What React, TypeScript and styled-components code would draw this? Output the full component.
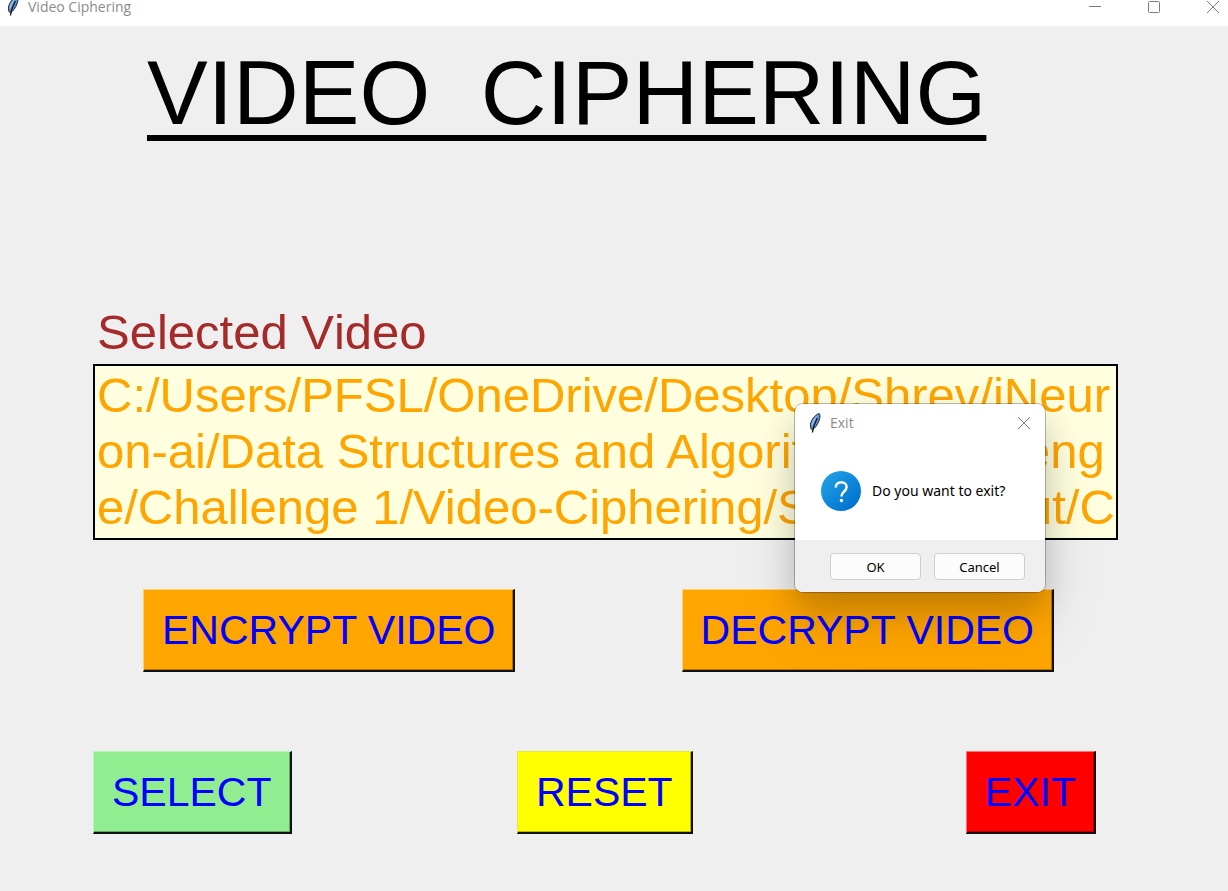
import React from "react";
import styled, { createGlobalStyle } from "styled-components";

const GlobalStyle = createGlobalStyle`
  *, *::before, *::after { box-sizing: border-box; }
  html, body { margin: 0; background: #efefef; }
  body { font-family: "Liberation Sans", Arial, sans-serif; font-kerning: none; }
  body, #root { min-height: 100vh; }
  #root { display: flex; flex-direction: column; }
`;

const Window = styled.div`
  position: relative;
  flex: 1;
  display: flex;
  flex-direction: column;
`;

const TitleBar = styled.header`
  display: flex;
  align-items: flex-start;
  height: 26px;
  padding-left: 7px;
  background: #fff;
  color: #8c8c8c;
`;

const WindowName = styled.span`
  flex: 1;
  margin-left: 9px;
  font: 14px/14px "Open Sans", sans-serif;
`;

const WindowControls = styled.div`
  display: flex;
  gap: 45px;
  padding-right: 8px;
`;

const IconButton = styled.button`
  display: flex;
  padding: 0;
  border: 0;
  background: none;
  color: #7c7c7c;
`;

const Content = styled.main`
  display: flex;
  flex-direction: column;
  padding: 14px 110px 56px 93px;
`;

const Heading = styled.h1`
  margin: 0 0 0 54px;
  font-size: 91px;
  line-height: 106px;
  font-weight: 400;
  color: #000;
  white-space: pre;
  text-decoration: underline;
  text-decoration-thickness: 6px;
  text-underline-offset: 11px;
  text-decoration-skip-ink: none;
`;

const FieldLabel = styled.label`
  margin-top: 158px;
  padding-left: 4px;
  font-size: 49px;
  line-height: 56px;
  color: #a52a2a;
`;

const PathField = styled.textarea`
  display: block;
  width: 100%;
  height: 176px;
  margin: 4px 0 0;
  padding: 1px 0 0 2px;
  border: 2px solid #000;
  border-radius: 0;
  outline: 0;
  resize: none;
  overflow: hidden;
  white-space: pre;
  background: #ffffe0;
  color: #ffa500;
  font: 49px/56px "Liberation Sans", Arial, sans-serif;
`;

const CipherRow = styled.div`
  display: flex;
  justify-content: space-between;
  margin-top: 49px;
  padding: 0 64px 0 50px;
`;

const ActionRow = styled.div`
  display: grid;
  grid-template-columns: 425fr 450fr auto;
  justify-items: start;
  margin-top: 79px;
  padding-right: 22px;
`;

const RaisedButton = styled.button<{ $fill: string; $light: string; $shade: string }>`
  height: 83px;
  padding: 0 18px;
  border: solid #111;
  border-width: 1px 2px 2px 1px;
  border-top-color: ${(p) => p.$light};
  border-left-color: ${(p) => p.$light};
  box-shadow: inset -1px -1px ${(p) => p.$shade};
  background: ${(p) => p.$fill};
  color: #00f;
  font: 41px/47px "Liberation Sans", Arial, sans-serif;
`;

const Dialog = styled.section`
  position: absolute;
  top: 404px;
  left: 795px;
  width: 250px;
  border-radius: 8px;
  background: #fff;
  box-shadow: 0 0 0 1px rgba(0, 0, 0, 0.25), 0 16px 32px rgba(0, 0, 0, 0.18), 0 32px 64px rgba(0, 0, 0, 0.1);
  font-family: "Open Sans", sans-serif;
`;

const DialogBar = styled.div`
  display: flex;
  align-items: center;
  height: 38px;
  padding: 0 14px;
`;

const DialogName = styled.h2`
  flex: 1;
  margin: 0 0 0 9px;
  color: #8c8c8c;
  font-size: 14px;
  line-height: 20px;
  font-weight: 400;
`;

const DialogBody = styled.div`
  display: flex;
  align-items: center;
  gap: 11px;
  height: 98px;
  padding: 0 0 0 26px;
  color: #000;
`;

const Message = styled.p`
  margin: 0;
  font: 14px/20px "Noto Sans", sans-serif;
`;

const DialogFooter = styled.div`
  display: flex;
  justify-content: flex-end;
  gap: 13px;
  height: 52px;
  padding: 13px 20px 0 0;
  border-radius: 0 0 8px 8px;
  background: #efefef;
`;

const DialogButton = styled.button`
  width: 91px;
  height: 27px;
  padding: 0;
  border: 1px solid #cfcfcf;
  border-radius: 4px;
  background: #fcfcfc;
  color: #000;
  font: 13px/20px "Noto Sans", sans-serif;
`;

const Feather = () => (
  <svg width="12" height="20" viewBox="0 0 12 20" aria-hidden="true">
    <path d="M10.300.6C7 1.300 3.500 5 1.900 9.500c-.7 2.300-.6 4.500.3 6.500l1.300.8L5.600 15C8 12.500 9.800 9 10.700 5.500c.4-2 .4-4-.4-4.900Z" fill="#5b93d3" stroke="#1b222c" strokeWidth="1" />
    <path d="M8.800 2C6 4 3.600 7.500 2.700 11l.2 2.500C4.500 9.500 6.500 5.500 8.800 2Z" fill="#a9c9ee" />
    <path d="M8.300 5C6.300 9 4.300 12.500 3.400 19.500" fill="none" stroke="#141414" strokeWidth="1.300" />
  </svg>
);

const Cross = () => (
  <svg width="14" height="14" viewBox="0 0 14 14" fill="none" stroke="currentColor" aria-hidden="true">
    <path d="M1 1 13 13M13 1 1 13" />
  </svg>
);

const QuestionIcon = () => (
  <svg width="40" height="40" viewBox="0 0 40 40" fill="none" aria-hidden="true">
    <defs>
      <linearGradient id="disc" x1="0" y1="0" x2="1" y2="1">
        <stop offset="0.1" stopColor="#1fa0e4" />
        <stop offset="0.9" stopColor="#0070cf" />
      </linearGradient>
    </defs>
    <circle cx="20" cy="20" r="20" fill="url(#disc)" />
    <path d="M14.800 16.500C14.800 13.300 17 11.300 20.200 11.300c3.200 0 5.400 1.900 5.400 4.700 0 4.400-5.200 4.600-5.200 9.500" stroke="#fff" strokeWidth="2.500" />
    <circle cx="20.400" cy="29.500" r="1.700" fill="#fff" />
  </svg>
);

const VIDEO_PATH = [
  "C:/Users/PFSL/OneDrive/Desktop/Shrev/iNeur",
  "on-ai/Data Structures and Algorithms/Challeng",
  "e/Challenge 1/Video-Ciphering/Sample Input/C",
].join("\n");

export default function App() {
  return (
    <>
      <GlobalStyle />
      <Window>
        <TitleBar>
          <svg width="12" height="16" viewBox="0 4 12 16" aria-hidden="true">
            <Feather />
          </svg>
          <WindowName>Video Ciphering</WindowName>
          <WindowControls>
            <IconButton aria-label="Minimize">
              <svg width="14" height="14" viewBox="0 0 14 14" fill="none" stroke="currentColor" aria-hidden="true">
                <path d="M1 6.500H13" />
              </svg>
            </IconButton>
            <IconButton aria-label="Maximize">
              <svg width="14" height="14" viewBox="0 0 14 14" fill="none" stroke="currentColor" aria-hidden="true">
                <rect x="1.500" y="1.500" width="11" height="11" rx="1" />
              </svg>
            </IconButton>
            <IconButton aria-label="Close">
              <Cross />
            </IconButton>
          </WindowControls>
        </TitleBar>
        <Content>
          <Heading>{"VIDEO  CIPHERING"}</Heading>
          <FieldLabel htmlFor="video-path">Selected Video</FieldLabel>
          <PathField id="video-path" rows={3} spellCheck={false} defaultValue={VIDEO_PATH} />
          <CipherRow>
            <RaisedButton $fill="#ffa500" $light="#ffd070" $shade="#b37400">ENCRYPT VIDEO</RaisedButton>
            <RaisedButton $fill="#ffa500" $light="#ffd070" $shade="#b37400">DECRYPT VIDEO</RaisedButton>
          </CipherRow>
          <ActionRow>
            <RaisedButton $fill="#90ee90" $light="#b4f8b4" $shade="#64a664">SELECT</RaisedButton>
            <RaisedButton $fill="#ffff00" $light="#e6e640" $shade="#b3b300">RESET</RaisedButton>
            <RaisedButton $fill="#ff0000" $light="#ff7070" $shade="#b30000">EXIT</RaisedButton>
          </ActionRow>
        </Content>
        <Dialog role="dialog" aria-labelledby="exit-title">
          <DialogBar>
            <Feather />
            <DialogName id="exit-title">Exit</DialogName>
            <IconButton aria-label="Close dialog">
              <Cross />
            </IconButton>
          </DialogBar>
          <DialogBody>
            <QuestionIcon />
            <Message>Do you want to exit?</Message>
          </DialogBody>
          <DialogFooter>
            <DialogButton>OK</DialogButton>
            <DialogButton>Cancel</DialogButton>
          </DialogFooter>
        </Dialog>
      </Window>
    </>
  );
}
